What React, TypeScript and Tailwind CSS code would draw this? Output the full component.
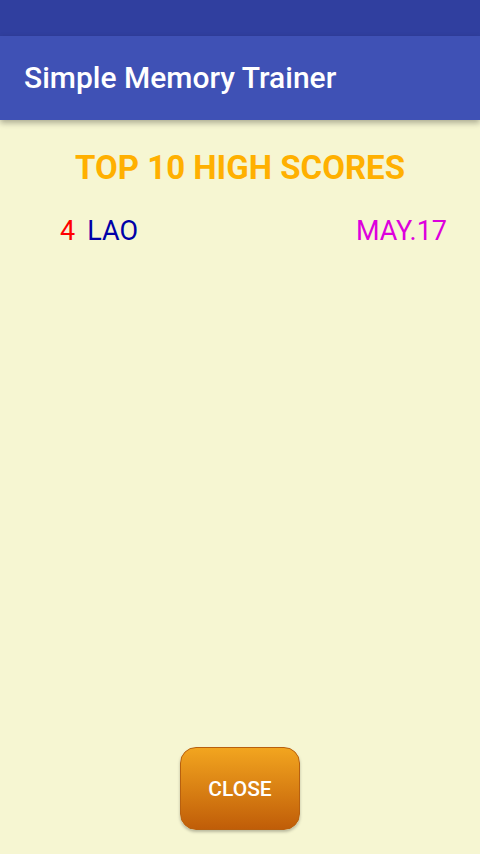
export default function App() {
  return (
    <div className="w-[480px] h-[854px] flex flex-col bg-[#f6f6d2] font-['Roboto',sans-serif] overflow-hidden">
      <div className="h-[36px] bg-[#303f9f] shrink-0" />
      <div className="h-[84px] bg-[#3f51b5] shrink-0 flex items-center px-6 shadow-[0_3px_6px_rgba(0,0,0,0.3)] relative z-10">
        <span className="text-white text-[30px] font-medium leading-none">Simple Memory Trainer</span>
      </div>
      <div className="flex-1 flex flex-col">
        <h1 className="text-center text-[#ffb000] text-[33px] font-bold leading-none mt-[31px]">TOP 10 HIGH SCORES</h1>
        <div className="flex items-center justify-between pl-[60px] pr-[33px] mt-[34px] text-[27px] leading-none">
          <div className="flex gap-[12px]">
            <span className="text-[#ff0000]">4</span>
            <span className="text-[#0000a8]">LAO</span>
          </div>
          <span className="text-[#dd00dd]">MAY.17</span>
        </div>
        <div className="flex-1" />
        <div className="flex justify-center mb-[24px]">
          <button className="w-[120px] h-[83px] pt-[3px] rounded-[16px] border border-[#b8600e] bg-gradient-to-b from-[#f2a51f] to-[#c05d08] text-white text-[21px] font-medium shadow-[0_2px_3px_rgba(0,0,0,0.25)]">
            CLOSE
          </button>
        </div>
      </div>
    </div>
  )
}
